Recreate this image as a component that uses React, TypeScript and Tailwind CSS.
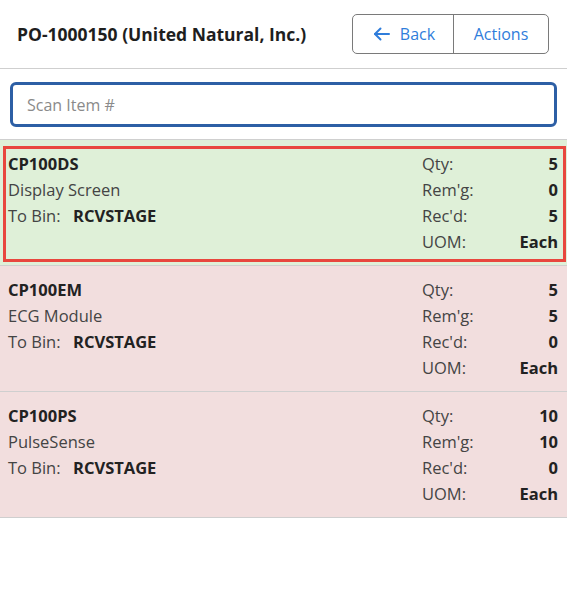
import { useState } from "react";

type Line = {
  id: string;
  item: string;
  description: string;
  bin: string;
  qty: number;
  remaining: number;
  received: number;
  uom: string;
};

const lines: Line[] = [
  { id: "1", item: "CP100DS", description: "Display Screen", bin: "RCVSTAGE", qty: 5, remaining: 0, received: 5, uom: "Each" },
  { id: "2", item: "CP100EM", description: "ECG Module", bin: "RCVSTAGE", qty: 5, remaining: 5, received: 0, uom: "Each" },
  { id: "3", item: "CP100PS", description: "PulseSense", bin: "RCVSTAGE", qty: 10, remaining: 10, received: 0, uom: "Each" },
];

function ArrowLeft() {
  return (
    <svg width="17" height="14" viewBox="0 0 17 14" fill="none" stroke="currentColor" strokeWidth="2" strokeLinecap="round" strokeLinejoin="round">
      <path d="M16 7H2" />
      <path d="M7.5 1.5L2 7l5.5 5.5" />
    </svg>
  );
}

export default function App() {
  const [scan, setScan] = useState("");
  const [selected, setSelected] = useState("1");

  return (
    <div className="min-h-[592px] bg-white text-[16.5px] text-[#222]" style={{ fontFamily: '"Open Sans", "Noto Sans", sans-serif' }}>
      <div className="flex h-[69px] items-center justify-between border-b border-[#cfcfcf] pl-[17px] pr-[18px]">
        <h1 className="text-[17.5px] font-bold text-[#1e1e1e]">PO-1000150 (United Natural, Inc.)</h1>
        <div className="-mt-[1px] flex h-[40px] overflow-hidden rounded-[5px] border border-[#7a7a7a] text-[16px] text-[#2f7ddb]">
          <button className="flex w-[101px] items-center justify-center gap-[10px] pl-[2px] border-r border-[#7a7a7a]">
            <ArrowLeft />
            <span>Back</span>
          </button>
          <button className="w-[94px]">Actions</button>
        </div>
      </div>

      <div className="border-b border-[#cfcfcf] px-[10px] pt-[13px] pb-[12px]">
        <input
          autoFocus
          value={scan}
          onChange={(e) => setScan(e.target.value)}
          placeholder="Scan Item #"
          className="h-[45px] w-[547px] rounded-[6px] border-[3px] border-[#2d5fa5] px-[14px] text-[16px] text-[#222] caret-[#222] outline-none placeholder:text-[#8a8a8a]"
        />
      </div>

      {lines.map((line) => {
        const done = line.remaining === 0;
        return (
          <div
            key={line.id}
            onClick={() => setSelected(line.id)}
            className={`border-b border-[#cfcfcf] pt-[6px] pb-[3px] pl-[3px] pr-[1px] ${done ? "bg-[#dff0d8]" : "bg-[#f2dede]"}`}
          >
            <div
              className={`flex justify-between border-[3px] pl-[2px] pr-[5px] pt-[2px] pb-[4px] leading-[26px] ${
                selected === line.id ? "border-[#e8473e]" : "border-transparent"
              }`}
            >
              <div>
                <div className="font-bold">{line.item}</div>
                <div className="text-[#444]">{line.description}</div>
                <div>
                  <span className="inline-block w-[65px] text-[#444]">To Bin:</span>
                  <span className="font-bold">{line.bin}</span>
                </div>
              </div>
              <div className="grid w-[136px] grid-cols-[auto_1fr] text-[#444]">
                <span>Qty:</span>
                <span className="text-right font-bold text-[#222]">{line.qty}</span>
                <span>Rem'g:</span>
                <span className="text-right font-bold text-[#222]">{line.remaining}</span>
                <span>Rec'd:</span>
                <span className="text-right font-bold text-[#222]">{line.received}</span>
                <span>UOM:</span>
                <span className="text-right font-bold text-[#222]">{line.uom}</span>
              </div>
            </div>
          </div>
        );
      })}
    </div>
  );
}
